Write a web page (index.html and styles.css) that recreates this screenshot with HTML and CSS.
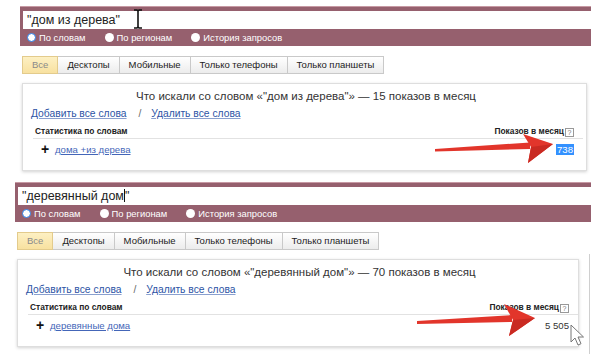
FILE: index.html
```html
<!DOCTYPE html>
<html lang="ru">
<head>
    <meta charset="UTF-8">
    <title>Wordstat</title>
    <link rel="stylesheet" href="styles.css">
</head>
<body>
    <!-- First capture -->
    <div class="shot shot-a">
        <div class="search">
            <div class="query">"дом из дерева"</div>
            <div class="modes">
                <span class="mode"><span class="radio checked"></span>По словам</span>
                <span class="mode"><span class="radio"></span>По регионам</span>
                <span class="mode"><span class="radio"></span>История запросов</span>
            </div>
        </div>

        <div class="tabs">
            <span class="tab active">Все</span>
            <span class="tab">Десктопы</span>
            <span class="tab">Мобильные</span>
            <span class="tab">Только телефоны</span>
            <span class="tab">Только планшеты</span>
        </div>

        <div class="card card-a">
            <div class="card-title">Что искали со словом «"дом из дерева"» — 15 показов в месяц</div>
            <div class="actions">
                <a class="action">Добавить все слова</a>
                <span class="sep">/</span>
                <a class="action">Удалить все слова</a>
            </div>
            <table class="stats">
                <tr>
                    <th class="col-word" colspan="2">Статистика по словам</th>
                    <th class="col-count">Показов в месяц<span class="help">?</span></th>
                </tr>
                <tr>
                    <td class="col-plus">+</td>
                    <td class="col-phrase"><a class="phrase">дома +из дерева</a></td>
                    <td class="col-count"><span class="selected">738</span></td>
                </tr>
            </table>
        </div>

        <svg class="ibeam" width="12" height="20" viewBox="0 0 12 20">
            <path d="M2 1h3l1 1 1-1h3M6 2v16M2 19h3l1-1 1 1h3" fill="none" stroke="#111" stroke-width="1.6"/>
        </svg>

        <svg class="arrow arrow-a" width="591" height="176" viewBox="0 0 591 176">
            <polygon points="435,149 530,142.5 530,149 435,151.5" fill="#e2352b"/>
            <polygon points="523,134 553,144 528,163 531,147" fill="#e2352b"/>
            <polygon points="531,147 553,144 528,163" fill="#c92a22"/>
        </svg>
    </div>

    <!-- Second capture -->
    <div class="shot shot-b">
        <div class="search">
            <div class="query">"деревянный дом<span class="caret"></span>"</div>
            <div class="modes">
                <span class="mode"><span class="radio checked"></span>По словам</span>
                <span class="mode"><span class="radio"></span>По регионам</span>
                <span class="mode"><span class="radio"></span>История запросов</span>
            </div>
        </div>

        <div class="tabs">
            <span class="tab active">Все</span>
            <span class="tab">Десктопы</span>
            <span class="tab">Мобильные</span>
            <span class="tab">Только телефоны</span>
            <span class="tab">Только планшеты</span>
        </div>

        <div class="result-row">
            <div class="card card-b">
                <div class="card-title">Что искали со словом «"деревянный дом"» — 70 показов в месяц</div>
                <div class="actions">
                    <a class="action">Добавить все слова</a>
                    <span class="sep">/</span>
                    <a class="action">Удалить все слова</a>
                </div>
                <table class="stats">
                    <tr>
                        <th class="col-word" colspan="2">Статистика по словам</th>
                        <th class="col-count">Показов в месяц<span class="help">?</span></th>
                    </tr>
                    <tr>
                        <td class="col-plus">+</td>
                        <td class="col-phrase"><a class="phrase">деревянные дома</a></td>
                        <td class="col-count">5 505</td>
                    </tr>
                </table>
            </div>
            <div class="side-edge"></div>
        </div>

        <svg class="arrow arrow-b" width="591" height="184" viewBox="0 0 591 184">
            <polygon points="417,145 512,139 512,146 417,148" fill="#e2352b"/>
            <polygon points="504,128 535,142 509,160 513,144" fill="#e2352b"/>
            <polygon points="513,144 535,142 509,160" fill="#c92a22"/>
        </svg>

        <svg class="pointer" width="14" height="22" viewBox="0 0 14 22">
            <path d="M1 1v17l4-4 3 7 3-1.3-3-6.7h5.5z" fill="#fff" stroke="#777" stroke-width="1" stroke-linejoin="round"/>
        </svg>
    </div>
</body>
</html>
```

FILE: styles.css
```css
* {
    box-sizing: border-box;
}

html, body {
    margin: 0;
    padding: 0;
}

body {
    width: 591px;
    height: 360px;
    overflow: hidden;
    background: #fff;
    font-family: Arial, "Liberation Sans", sans-serif;
    color: #333;
}

.shot {
    position: relative;
    height: 176px;
    padding-top: 6px;
}

.shot-a {
    padding-left: 20px;
}

.shot-b {
    padding-left: 15px;
}

/* Search block */
.search {
    width: 700px;
    height: 40px;
    background: #96606e;
    padding: 4px 0 0 3px;
    border-top: 1px solid #c79aa4;
}

.query {
    height: 18px;
    background: #fff;
    font-size: 12.5px;
    line-height: 18px;
    padding-left: 4px;
    color: #222;
}

.caret {
    display: inline-block;
    width: 1px;
    height: 13px;
    background: #111;
    vertical-align: -2px;
}

.modes {
    display: flex;
    height: 17px;
    align-items: center;
    padding-left: 4px;
    font-size: 9.4px;
    color: #fff;
}

.mode {
    display: flex;
    align-items: center;
    margin-right: 19px;
}

.radio {
    width: 9px;
    height: 9px;
    border-radius: 50%;
    background: #fff;
    margin-right: 3px;
}

.radio.checked {
    border: 1.5px solid #2a7ee6;
}

/* Tabs */
.tabs {
    display: flex;
    margin: 10px 0 0 2px;
    height: 18px;
}

.tab {
    font-size: 9.5px;
    line-height: 16px;
    padding: 0 9px;
    border: 1px solid #c9c9c9;
    border-left: none;
    background: linear-gradient(#ffffff, #ececec);
    color: #222;
}

.tab:first-child {
    border-left: 1px solid #c9c9c9;
}

.tab.active {
    background: linear-gradient(#fdf0c3, #f8e1a0);
    border-color: #e3cb8c;
    color: #8a8a8a;
}

/* Result card */
.card {
    margin: 9px 0 0 2px;
    border: 1px solid #dedede;
    box-shadow: 0 1px 3px rgba(0, 0, 0, 0.18);
    padding: 5px 5px 10px 8px;
    background: #fff;
}

.card-a {
    width: 565px;
}

.card-b {
    width: 562px;
}

.result-row {
    display: flex;
    align-items: flex-start;
}

.side-edge {
    width: 1px;
    height: 100px;
    margin: 4px 0 0 10px;
    background: #cfcfcf;
}

.card-title {
    text-align: center;
    font-size: 11.5px;
    line-height: 15px;
    color: #333;
}

.actions {
    margin-top: 3px;
    font-size: 10.3px;
    line-height: 14px;
}

.action {
    color: #2d54a5;
    text-decoration: underline;
    text-decoration-color: #8aa0cf;
}

.sep {
    color: #666;
    margin: 0 7px 0 9px;
}

.stats {
    width: 550px;
    margin: 5px 0 0 2px;
    border-collapse: collapse;
}

.stats th {
    font-size: 8.4px;
    font-weight: bold;
    line-height: 11px;
    padding: 0 0 1px 2px;
    border-bottom: 1px solid #e2e2e2;
    color: #222;
    text-align: left;
}

.stats th.col-count {
    text-align: right;
    padding-right: 9px;
}

.help {
    display: inline-block;
    width: 9px;
    height: 9px;
    border: 1px solid #999;
    font-size: 7px;
    line-height: 7px;
    text-align: center;
    color: #777;
    margin-left: 1px;
    vertical-align: -1px;
    font-weight: normal;
}

.stats td {
    height: 21px;
    font-size: 9.6px;
    padding: 0;
}

.col-plus {
    width: 22px;
    padding-left: 8px !important;
    font-weight: bold;
    font-size: 14px !important;
    color: #111;
}

.phrase {
    color: #4466b8;
    text-decoration: underline;
}

.stats td.col-count {
    text-align: right;
    padding-right: 9px;
    color: #333;
}

.selected {
    background: #3391ff;
    color: #fff;
    padding: 0 1px;
}

/* Annotations drawn over the captures */
.arrow {
    position: absolute;
    left: 0;
    top: 0;
    pointer-events: none;
}

.ibeam {
    position: absolute;
    left: 132px;
    top: 9px;
}

.pointer {
    position: absolute;
    left: 570px;
    top: 148px;
}
```
